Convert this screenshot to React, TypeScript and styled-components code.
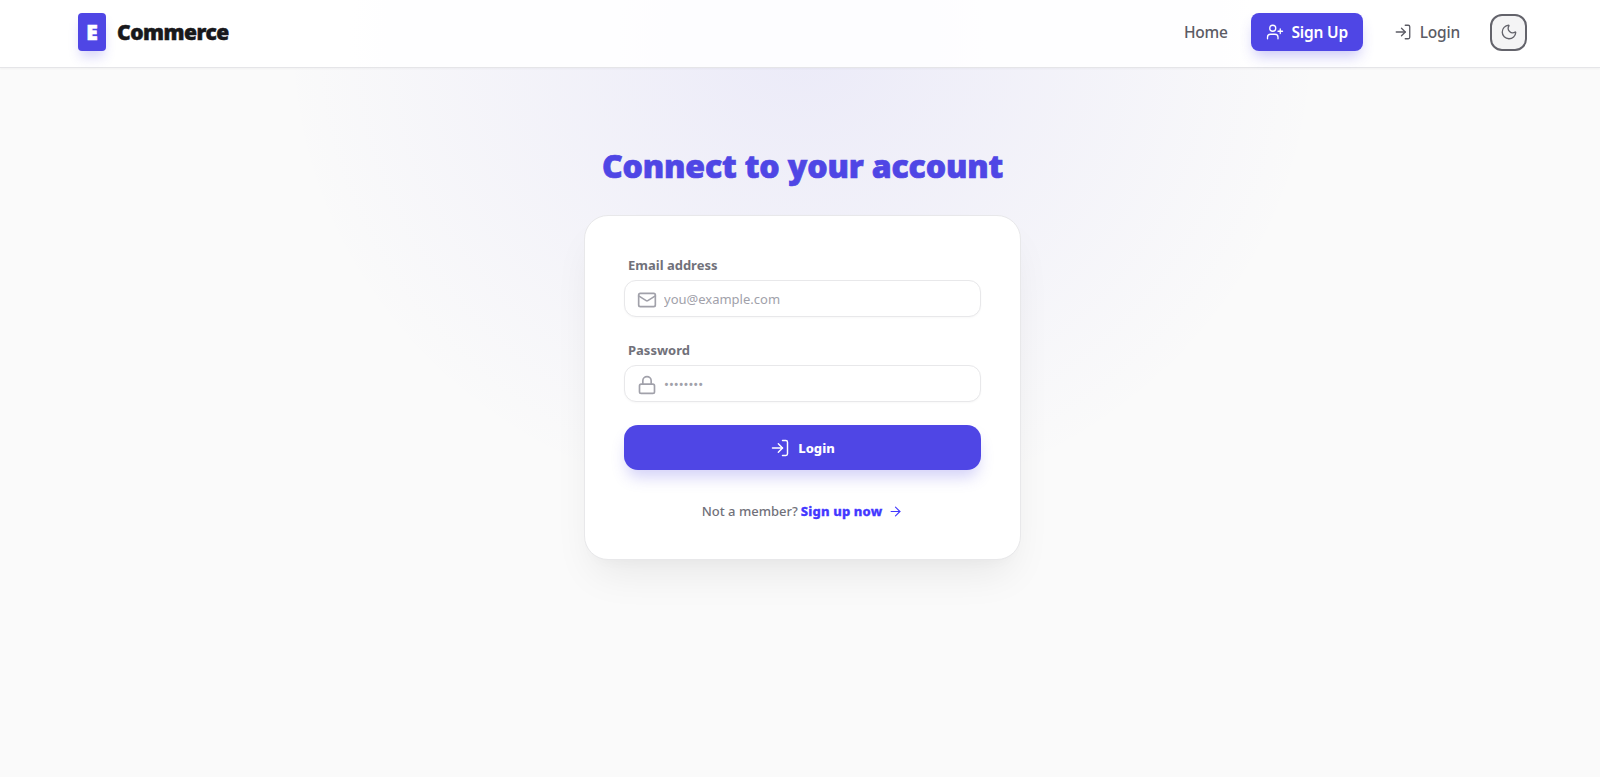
import React from "react";
import styled, { createGlobalStyle } from "styled-components";
import { Mail, Lock, LogIn, UserPlus, Moon, ArrowRight } from "lucide-react";

const Global = createGlobalStyle`
  * { box-sizing: border-box; }
  html, body { margin: 0; padding: 0; height: 100%; }
  body { background: #fafafa; font-family: "Noto Sans", "Open Sans", sans-serif; overflow: hidden; }
`;

const Page = styled.div`
  height: 777px;
  display: flex;
  flex-direction: column;
  background: radial-gradient(ellipse 520px 480px at 802px 40px, rgba(79, 70, 229, 0.085), rgba(79, 70, 229, 0) 100%), #fafafa;
`;

const Nav = styled.header`
  height: 68px;
  flex: none;
  display: flex;
  align-items: center;
  justify-content: space-between;
  padding: 0 73px 3px 78px;
  background: rgba(255, 255, 255, 0.88);
  border-bottom: 1px solid #e5e5e8;
  box-shadow: 0 1px 2px rgba(0, 0, 0, 0.04);
`;

const Brand = styled.div`
  display: flex;
  align-items: center;
  gap: 11px;
`;

const LogoBox = styled.div`
  width: 28px;
  height: 38px;
  border-radius: 4px;
  background: #4f46e5;
  color: #fff;
  font-weight: 900;
  font-size: 21px;
  -webkit-text-stroke: 0.6px #fff;
  display: flex;
  align-items: center;
  justify-content: center;
  box-shadow: 0 8px 12px -2px rgba(79, 70, 229, 0.22);
`;

const BrandName = styled.span`
  font-size: 21px;
  font-weight: 900;
  color: #18181b;
  letter-spacing: -0.5px;
  -webkit-text-stroke: 0.5px #18181b;
`;

const NavLinks = styled.nav`
  display: flex;
  align-items: center;
`;

const HomeLink = styled.a`
  font-size: 15.5px;
  letter-spacing: -0.2px;
  font-weight: 500;
  color: #5b5b64;
  margin-right: 23px;
`;

const SignUpButton = styled.a`
  width: 112px;
  height: 38px;
  border-radius: 8px;
  background: #4f46e5;
  color: #fff;
  font-size: 15.5px;
  letter-spacing: -0.2px;
  font-weight: 600;
  display: flex;
  align-items: center;
  justify-content: center;
  gap: 8px;
  box-shadow: 0 8px 14px -3px rgba(79, 70, 229, 0.3);
  margin-right: 31px;
`;

const LoginLink = styled.a`
  font-size: 15.5px;
  letter-spacing: -0.2px;
  font-weight: 500;
  color: #5b5b64;
  display: flex;
  align-items: center;
  gap: 8px;
  margin-right: 30px;
`;

const ThemeToggle = styled.button`
  width: 37px;
  height: 37px;
  padding: 0;
  border-radius: 12px;
  border: 2px solid #63636b;
  background: #f4f4f5;
  color: #63636b;
  display: flex;
  align-items: center;
  justify-content: center;
`;

const Main = styled.main`
  flex: 1;
  display: flex;
  flex-direction: column;
  align-items: center;
  padding: 76px 0 0 5px;
`;

const Title = styled.h1`
  margin: 0 0 27px;
  font-size: 32px;
  line-height: 44px;
  font-weight: 900;
  color: #4f46e5;
  letter-spacing: -0.15px;
  -webkit-text-stroke: 0.7px #4f46e5;
`;

const Card = styled.form`
  width: 437px;
  height: 345px;
  padding: 40px 39px;
  border-radius: 24px;
  background: #fff;
  border: 1px solid #e8e8ea;
  box-shadow: 0 22px 40px -10px rgba(0, 0, 0, 0.08), 0 8px 14px -8px rgba(0, 0, 0, 0.03);
  display: flex;
  flex-direction: column;
`;

const Field = styled.div`
  flex: none;
  margin-bottom: 24px;
`;

const Label = styled.label`
  display: block;
  padding-left: 4px;
  margin-bottom: 6px;
  font-size: 13px;
  line-height: 18px;
  font-weight: 700;
  color: #71717a;
`;

const InputBox = styled.div`
  height: 37px;
  border-radius: 12px;
  border: 1.5px solid #e8e8ea;
  box-shadow: 0 1px 2px rgba(0, 0, 0, 0.03);
  background: #fff;
  display: flex;
  align-items: center;
  gap: 7px;
  padding-left: 12px;
  color: #a1a1aa;
  svg { margin-top: 2px; }
`;

const Input = styled.input`
  flex: 1;
  min-width: 0;
  border: none;
  outline: none;
  background: transparent;
  font-family: inherit;
  font-size: 13px;
  color: #3f3f46;
  padding: 0;
  &::placeholder { color: #a1a1aa; opacity: 1; }
`;

const Submit = styled.button`
  flex: none;
  height: 45px;
  margin-top: -1px;
  border: none;
  border-radius: 14px;
  background: #4f46e5;
  color: #fff;
  font-family: inherit;
  font-size: 13px;
  font-weight: 800;
  display: flex;
  align-items: center;
  justify-content: center;
  gap: 8px;
  box-shadow: 0 10px 15px -3px rgba(79, 70, 229, 0.25);
`;

const Footer = styled.p`
  flex: none;
  margin: 32px 0 0;
  font-size: 13px;
  line-height: 18px;
  color: #71717a;
  font-weight: 500;
  display: flex;
  align-items: center;
  justify-content: center;
`;

const FooterLink = styled.a`
  margin-left: 3px;
  color: #4338ff;
  font-size: 13px;
  letter-spacing: 0.15px;
  font-weight: 800;
  -webkit-text-stroke: 0.3px #4338ff;
  display: flex;
  align-items: center;
  gap: 6px;
`;

export default function App() {
  return (
    <>
      <Global />
      <Page>
        <Nav>
          <Brand>
            <LogoBox>E</LogoBox>
            <BrandName>Commerce</BrandName>
          </Brand>
          <NavLinks>
            <HomeLink>Home</HomeLink>
            <SignUpButton><UserPlus size={18} strokeWidth={1.75} />Sign Up</SignUpButton>
            <LoginLink><LogIn size={18} strokeWidth={1.75} />Login</LoginLink>
            <ThemeToggle aria-label="Toggle theme"><Moon size={18} strokeWidth={1.75} /></ThemeToggle>
          </NavLinks>
        </Nav>
        <Main>
          <Title>Connect to your account</Title>
          <Card onSubmit={(e) => e.preventDefault()}>
            <Field>
              <Label>Email address</Label>
              <InputBox>
                <Mail size={20} strokeWidth={2} />
                <Input type="email" placeholder="you@example.com" />
              </InputBox>
            </Field>
            <Field>
              <Label>Password</Label>
              <InputBox>
                <Lock size={20} strokeWidth={2} />
                <Input type="password" placeholder="••••••••" />
              </InputBox>
            </Field>
            <Submit type="submit"><LogIn size={20} strokeWidth={1.75} />Login</Submit>
            <Footer>
              Not a member?
              <FooterLink>Sign up now <ArrowRight size={15} strokeWidth={1.75} /></FooterLink>
            </Footer>
          </Card>
        </Main>
      </Page>
    </>
  );
}
